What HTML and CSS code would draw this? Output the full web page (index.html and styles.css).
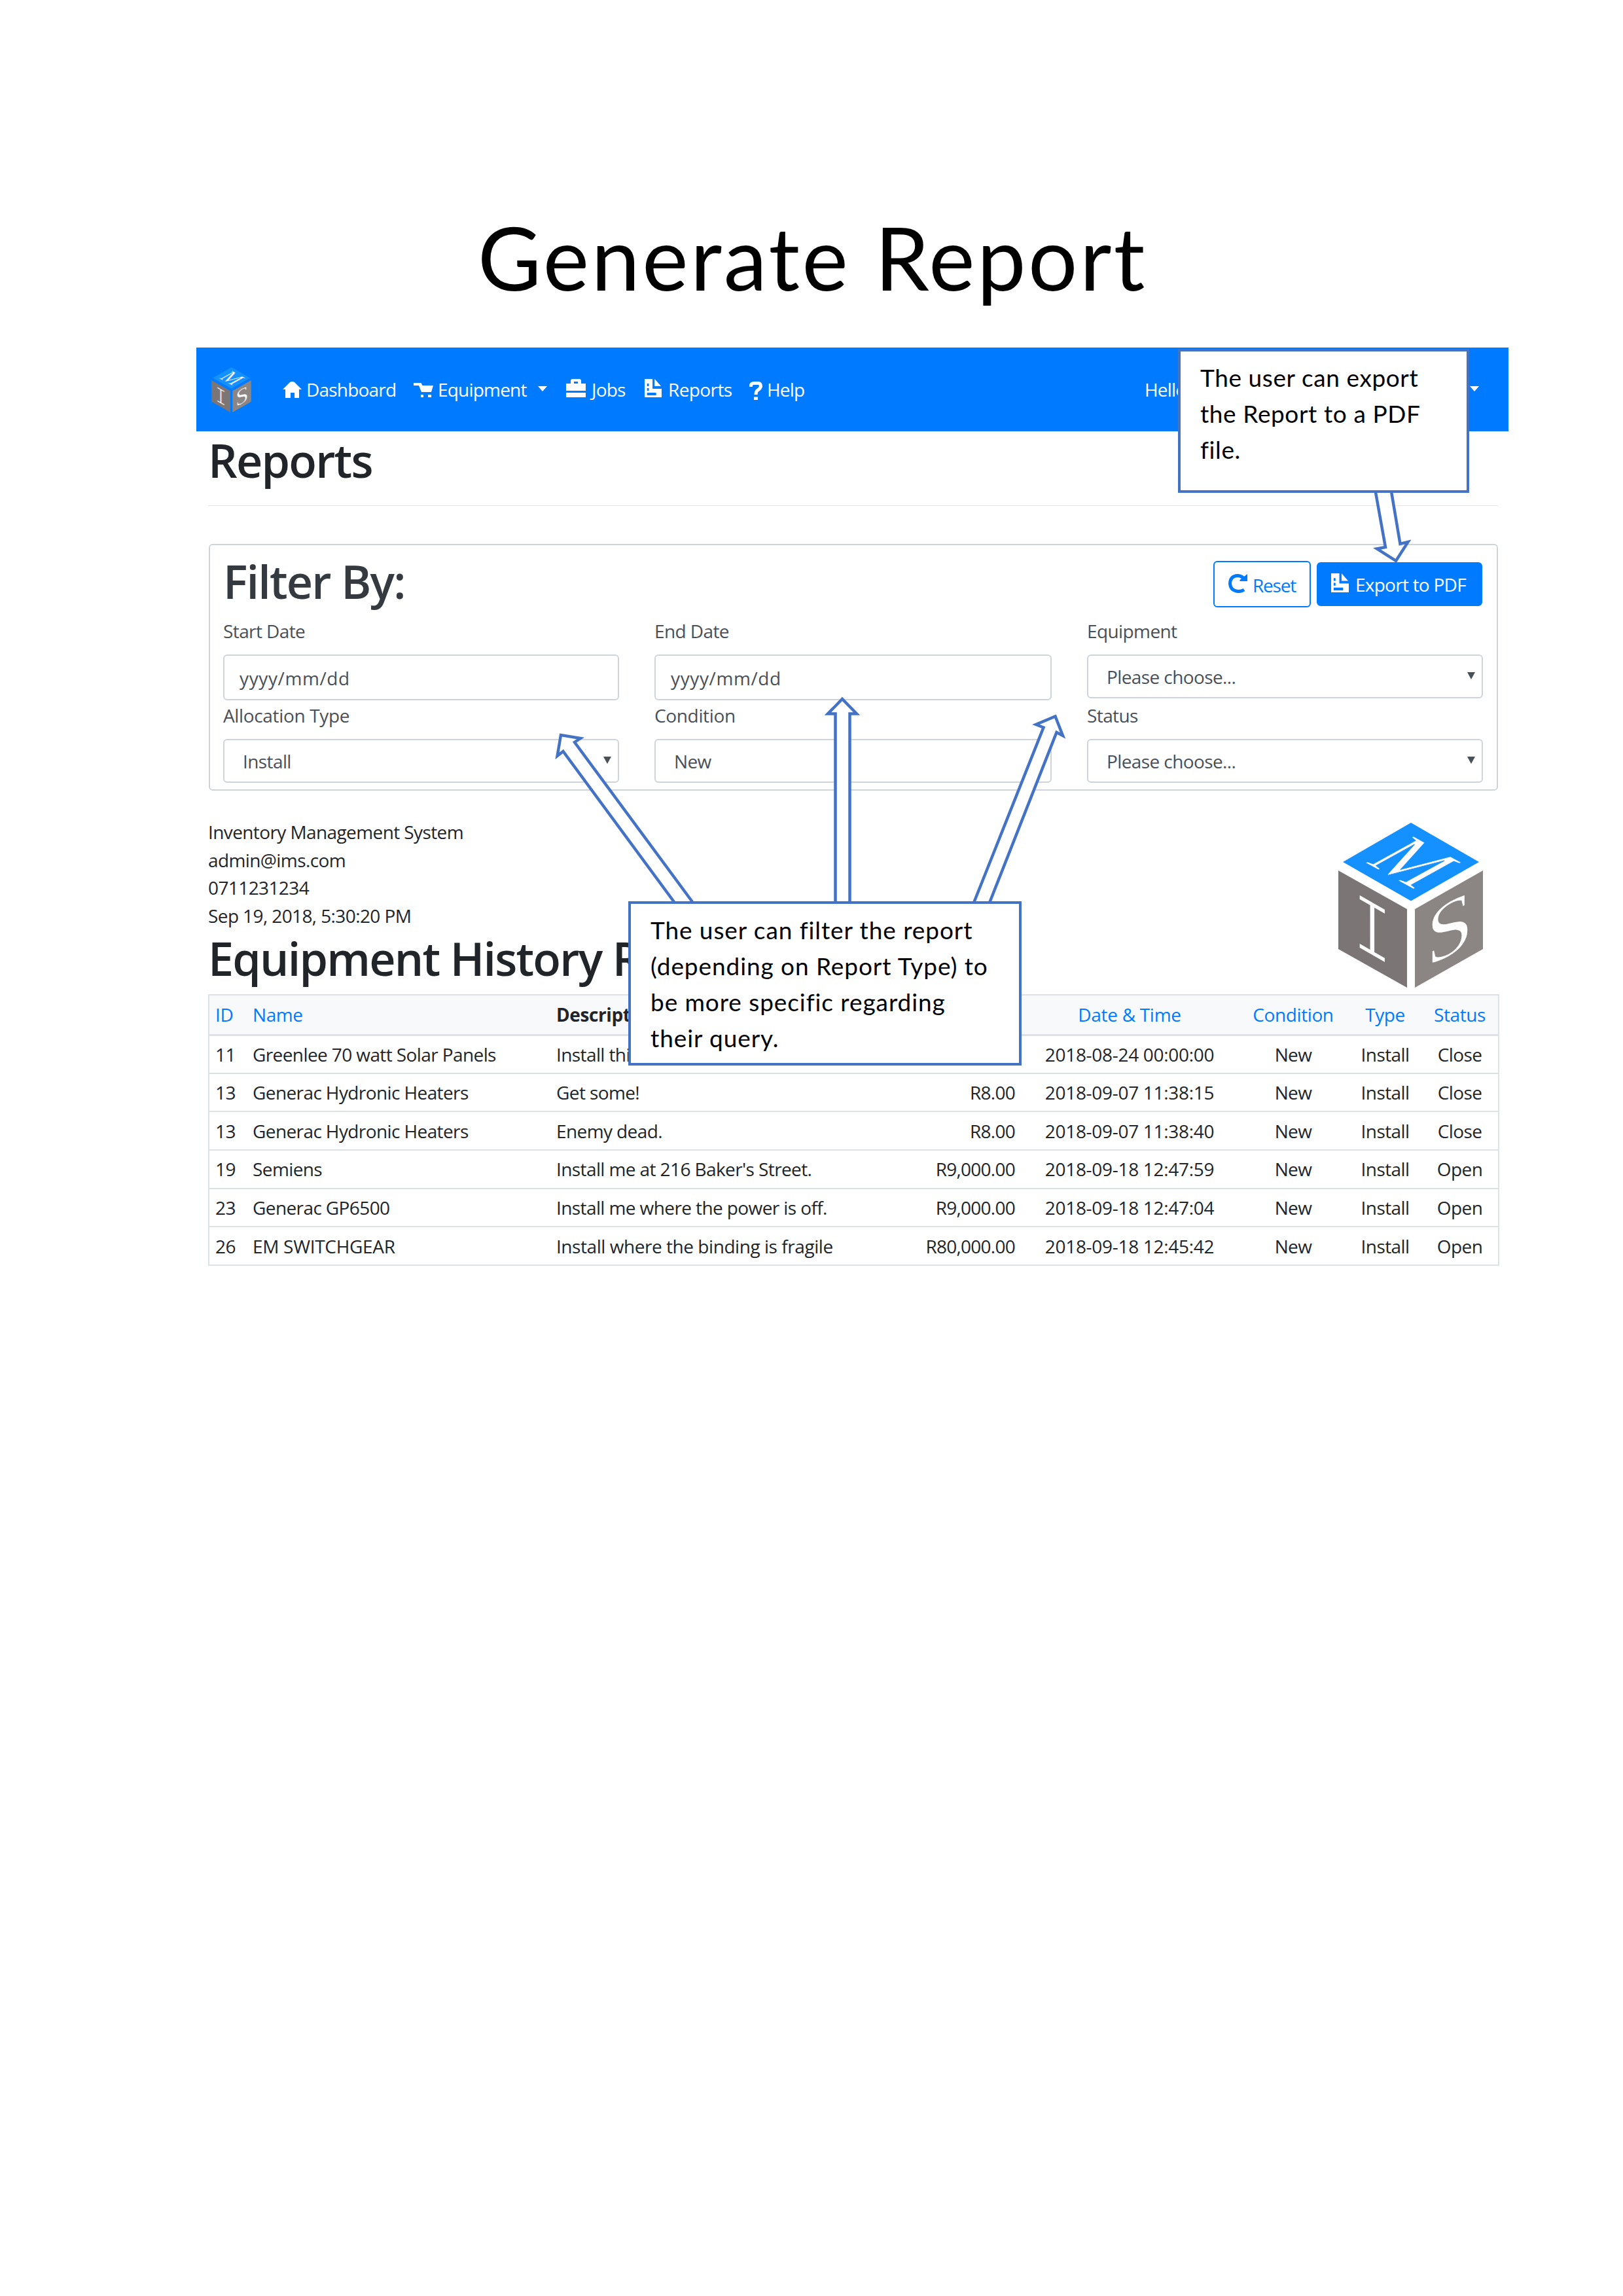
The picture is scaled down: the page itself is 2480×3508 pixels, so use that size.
FILE: index.html
```html
<!DOCTYPE html>
<html lang="en">
<head>
<meta charset="utf-8">
<title>Generate Report</title>
<link rel="stylesheet" href="styles.css">
</head>
<body>
<svg class="defs" width="0" height="0" aria-hidden="true">
  <symbol id="cube" viewBox="0 0 221 252">
    <path class="cube-top" d="M111 0 215 60 111 119.500 7 60Z"/>
    <path class="cube-left" d="M0 73 105 132V252L0 193Z"/>
    <path class="cube-right" d="M117 132 221 73V193L117 252Z"/>
    <text class="cube-letter cube-m" transform="matrix(.88 .48 -1.12 .62 39 60)">M</text>
    <text class="cube-letter cube-i" transform="matrix(1.03 .59 0 1.27 21 186)">I</text>
    <text class="cube-letter cube-s" transform="matrix(1.3 -.73 0 1.25 134 223)">S</text>
  </symbol>
  <symbol id="file" viewBox="0 0 28 28">
    <path fill-rule="evenodd" d="M0 0H13V15H28V28H0ZM4 7H7V11H4ZM4 14H7V18H4ZM4 21H19V25H4Z"/>
    <path d="M16.500 0 27 11H16.500Z"/>
  </symbol>
</svg>

<main class="document">
  <h1 class="document-title">Generate Report</h1>

  <section class="app">
    <nav class="navbar">
      <svg class="brand" width="61" height="69"><use href="#cube"/></svg>
      <a class="nav-item"><svg width="29" height="25" viewBox="0 0 29 25"><path d="M0 12 11 1Q14.500-1 18 1L29 12H25V25H18V17H12V25H4V12Z"/></svg>Dashboard</a>
      <a class="nav-item"><svg width="30" height="22" viewBox="0 0 30 22"><path d="M0 0H11.500L13.500 4H30L27 14H12L8 4H0Z"/><path d="M11 18H15V22H11ZM22 18H27V22H22Z"/></svg>Equipment<span class="caret"></span></a>
      <a class="nav-item nav-jobs"><svg class="raised" width="30" height="28" viewBox="0 0 30 28"><path fill-rule="evenodd" d="M7 7V3Q7 0 10 0H20Q23 0 23 3V7H30V18H0V7ZM12 7H18V4H12Z"/><path d="M0 21H30V28H0Z"/></svg>Jobs</a>
      <a class="nav-item nav-reports"><svg class="raised" width="26" height="28" viewBox="0 0 28 28" preserveAspectRatio="none"><use href="#file"/></svg>Reports</a>
      <a class="nav-item nav-help"><svg width="20" height="28" viewBox="0 0 20 28"><path class="question" d="M2.500 8V5Q4 2.500 7 2.500H14Q17.500 3 17.500 7Q17.500 10 13 13Q10 15 10 20"/><path d="M7 23.500H13V28H7Z"/></svg>Help</a>
      <a class="nav-item nav-user">Hello<span class="caret"></span></a>
    </nav>

    <div class="page">
      <h2 class="heading">Reports</h2>
      <hr class="rule">

      <form class="filters">
        <header class="filters-head">
          <h2 class="heading heading-muted">Filter By:</h2>
          <div class="actions">
            <button type="button" class="btn btn-outline"><svg width="29" height="29" viewBox="0 0 29 29"><path class="reload" d="M24 24Q20 27 14 26.500Q3 25 2.500 14.500Q3 3 14 2.500Q19 2.500 23 6"/><path d="M29 0V11H17.500V9Z"/></svg>Reset</button>
            <button type="button" class="btn btn-primary"><svg width="27" height="29" viewBox="0 0 28 28" preserveAspectRatio="none"><use href="#file"/></svg>Export to PDF</button>
          </div>
        </header>
        <div class="fields">
          <div class="field"><label>Start Date</label><div class="control control-date">yyyy/mm/dd</div></div>
          <div class="field"><label>End Date</label><div class="control control-date">yyyy/mm/dd</div></div>
          <div class="field"><label>Equipment</label><div class="control">Please choose...<span class="arrow"></span></div></div>
          <div class="field"><label class="wide">Allocation Type</label><div class="control">Install<span class="arrow"></span></div></div>
          <div class="field"><label class="wide">Condition</label><div class="control">New</div></div>
          <div class="field"><label>Status</label><div class="control">Please choose...<span class="arrow"></span></div></div>
        </div>
      </form>

      <header class="report-head">
        <div>
          <p>Inventory Management System</p>
          <p>admin@ims.com</p>
          <p>0711231234</p>
          <p>Sep 19, 2018, 5:30:20 PM</p>
          <h2 class="heading">Equipment History Report</h2>
        </div>
        <svg class="report-logo" width="221" height="252"><use href="#cube"/></svg>
      </header>

      <table class="report">
        <colgroup><col class="c-id"><col class="c-name"><col class="c-desc"><col class="c-price"><col class="c-date"><col class="c-cond"><col class="c-type"><col class="c-status"></colgroup>
        <thead>
          <tr><th>ID</th><th>Name</th><th class="plain">Description</th><th class="num"></th><th class="mid date">Date &amp; Time</th><th class="mid">Condition</th><th class="mid">Type</th><th class="mid">Status</th></tr>
        </thead>
        <tbody>
          <tr><td>11</td><td>Greenlee 70 watt Solar Panels</td><td>Install this</td><td class="num"></td><td class="mid date">2018-08-24 00:00:00</td><td class="mid">New</td><td class="mid">Install</td><td class="mid">Close</td></tr>
          <tr><td>13</td><td>Generac Hydronic Heaters</td><td>Get some!</td><td class="num">R8.00</td><td class="mid date">2018-09-07 11:38:15</td><td class="mid">New</td><td class="mid">Install</td><td class="mid">Close</td></tr>
          <tr><td>13</td><td>Generac Hydronic Heaters</td><td>Enemy dead.</td><td class="num">R8.00</td><td class="mid date">2018-09-07 11:38:40</td><td class="mid">New</td><td class="mid">Install</td><td class="mid">Close</td></tr>
          <tr><td>19</td><td>Semiens</td><td>Install me at 216 Baker's Street.</td><td class="num">R9,000.00</td><td class="mid date">2018-09-18 12:47:59</td><td class="mid">New</td><td class="mid">Install</td><td class="mid">Open</td></tr>
          <tr><td>23</td><td>Generac GP6500</td><td>Install me where the power is off.</td><td class="num">R9,000.00</td><td class="mid date">2018-09-18 12:47:04</td><td class="mid">New</td><td class="mid">Install</td><td class="mid">Open</td></tr>
          <tr><td>26</td><td class="caps">EM SWITCHGEAR</td><td class="loose">Install where the binding is fragile</td><td class="num">R80,000.00</td><td class="mid date">2018-09-18 12:45:42</td><td class="mid">New</td><td class="mid">Install</td><td class="mid">Open</td></tr>
        </tbody>
      </table>
    </div>

    <svg class="arrows" width="2005" height="1100" viewBox="300 531 2005 1100">
      <path d="M2100.700 745 2117 836 2104 838.500 2133 857 2151.500 828 2139.500 831 2125 745"/>
      <path d="M1030 1378 860.500 1148 851.600 1155 857 1123 887 1128 878 1134 1058 1378"/>
      <path d="M1276.500 1378V1090.500H1265L1287 1068 1309 1090.500H1298.500V1378"/>
      <path d="M1488.500 1378 1594.500 1111.500 1583 1107 1612.500 1094.500 1624 1124 1614.500 1119 1512.500 1378"/>
    </svg>
    <p class="callout callout-export">The user can export<br>the Report to a PDF<br>file.</p>
    <p class="callout callout-filter">The user can filter the report<br>(depending on Report Type) to<br>be more specific regarding<br>their query.</p>
  </section>
</main>
</body>
</html>
```
FILE: styles.css
```css
* { box-sizing: border-box; }

body {
  margin: 0;
  width: 2480px;
  height: 3508px;
  background: #fff;
  color: #212529;
  font: 28px/42px "Open Sans", "Noto Sans", sans-serif;
  letter-spacing: -0.6px;
}

h1, h2, p { margin: 0; }
svg { display: block; flex: none; }
.defs { position: absolute; }

.document { padding-top: 313px; }

.document-title {
  margin-bottom: 58px;
  padding-left: 3px;
  color: #000;
  font: 400 133px/160px Lato, sans-serif;
  letter-spacing: 3.5px;
  text-align: center;
}

.app {
  position: relative;
  width: 2005px;
  margin-left: 300px;
}

/* Navigation */
.navbar {
  display: grid;
  grid-template-columns: 109px 200px 233px 120px 160px 606px 1fr;
  align-items: center;
  height: 128px;
  padding-left: 23px;
  background: #007bff;
  color: #fff;
}

.nav-item {
  display: flex;
  align-items: center;
  gap: 7px;
  letter-spacing: -0.8px;
  fill: #fff;
}

.nav-item svg { margin-bottom: -1px; }
.nav-item .raised { margin-bottom: 4px; }
.nav-jobs { gap: 9px; }
.nav-reports { gap: 10px; letter-spacing: -0.6px; }
.nav-help { gap: 7px; }
.nav-help svg { margin-bottom: -4px; }
.nav-user { margin-left: -2px; }

.caret {
  margin: 0 0 2px 10px;
  border: 7px solid transparent;
  border-top: 8px solid #fff;
  border-bottom: 0;
}
.nav-user .caret { margin: 0 45px 2px auto; }

.question { fill: none; stroke: #fff; stroke-width: 5; }
.reload { fill: none; stroke: #007bff; stroke-width: 5; }

/* Cube logo */
.cube-top { fill: #1590ff; }
.cube-left { fill: #7c7575; }
.cube-right { fill: #8b8584; }
.cube-letter {
  fill: #fff;
  font: 100px "Liberation Serif", serif;
  letter-spacing: 0;
}
.cube-m { stroke: #1590ff; stroke-width: 1; }
.cube-i { font-family: "Liberation Mono", monospace; stroke: #7c7575; stroke-width: 3; }
.cube-s { stroke: #8b8584; stroke-width: 1.500; }

/* Page */
.page { padding: 2px 16px 0 18px; }

.heading {
  font-size: 70px;
  font-weight: 600;
  line-height: 84px;
  letter-spacing: -1.8px;
}
.heading-muted { color: #343a40; }

.rule {
  height: 1px;
  margin: 27px 0 58px;
  border: 0;
  background: #e3e3e4;
}

.filters {
  height: 377px;
  margin-left: 1px;
  padding: 13px 22px 0 20px;
  border: 2px solid #ced4da;
  border-radius: 6px;
}

.filters-head {
  display: flex;
  justify-content: space-between;
  margin-bottom: 13px;
}

.actions {
  display: flex;
  align-items: flex-start;
  gap: 9px;
  padding-top: 11px;
}

.btn {
  display: flex;
  align-items: center;
  border: 2px solid #007bff;
  border-radius: 6px;
  font: inherit;
}
.btn-outline {
  gap: 8px;
  width: 149px;
  height: 71px;
  padding: 2px 0 0 21px;
  background: #fff;
  color: #007bff;
  fill: #007bff;
  letter-spacing: -1.2px;
}
.btn-outline svg { margin-bottom: 4px; }
.btn-primary {
  gap: 10px;
  width: 253px;
  height: 67px;
  margin-top: 2px;
  padding: 0 0 0 20px;
  background: #007bff;
  color: #fff;
  fill: #fff;
  letter-spacing: -0.75px;
}
.btn-primary svg { margin-bottom: 4px; }

.fields {
  display: grid;
  grid-template-columns: 605px 607px 605px;
  grid-template-rows: 129px 124px;
  column-gap: 54px;
  width: 1925px;
  color: #495057;
}

.field { display: flex; flex-direction: column; gap: 15px; }
.wide { letter-spacing: -0.35px; }

.control {
  display: flex;
  align-items: center;
  justify-content: space-between;
  height: 67px;
  padding: 1px 10px 0 28px;
  border: 2px solid #ced4da;
  border-radius: 6px;
}
.control-date {
  height: 70px;
  padding-left: 23px;
  letter-spacing: 0.6px;
}

.arrow {
  margin-bottom: 4px;
  border: 6px solid transparent;
  border-top: 11px solid #495057;
  border-bottom: 0;
}

/* Report */
.report-head {
  display: flex;
  justify-content: space-between;
  height: 311px;
  padding: 42px 23px 0 0;
}
.report-head p { height: 42.700px; }
.report-head .heading { margin-top: 1px; }
.report-logo { margin-top: 7px; }

.report {
  width: 1971px;
  border-collapse: collapse;
  table-layout: fixed;
  border: 2px solid #dee2e6;
}
.c-id { width: 56px; }
.c-name { width: 464px; }
.c-desc { width: 470px; }
.c-price { width: 252px; }
.c-date { width: 330px; }
.c-cond { width: 170px; }
.c-type { width: 111px; }
.c-status { width: 118px; }

.report tr { height: 58.670px; }
.report thead tr { height: 61px; background: #f8f9fb; }
.report td, .report th {
  padding: 0 11px;
  border-bottom: 2px solid #dee2e6;
  text-align: left;
  white-space: nowrap;
}
.report td:first-child, .report th:first-child { padding: 0 0 0 9px; }
.report th { color: #007bff; font-weight: 400; border-bottom-width: 3px; letter-spacing: -0.4px; }
.report .plain { color: #212529; font-weight: 700; }
.report .num { padding-right: 10px; text-align: right; letter-spacing: -0.75px; }
.report .mid { padding: 0; text-align: center; }
.report .date { letter-spacing: -0.3px; }
.report .caps { letter-spacing: -0.3px; }
.report .loose { letter-spacing: -0.45px; }

/* Annotations lying over the screen */
.arrows {
  position: absolute;
  top: 0;
  left: 0;
  fill: #fff;
  stroke: #4472c4;
  stroke-width: 4.500;
}

.callout {
  position: absolute;
  padding: 12px 0 0 30px;
  border: 4px solid #4472c4;
  background: #fff;
  color: #000;
  font: 37px/55px Lato, sans-serif;
  white-space: nowrap;
}
.callout-export {
  top: 2px;
  left: 1500px;
  width: 445px;
  height: 220px;
  letter-spacing: 0.6px;
}
.callout-filter {
  top: 846px;
  left: 660px;
  width: 601px;
  height: 251px;
  letter-spacing: 0.92px;
}
```
